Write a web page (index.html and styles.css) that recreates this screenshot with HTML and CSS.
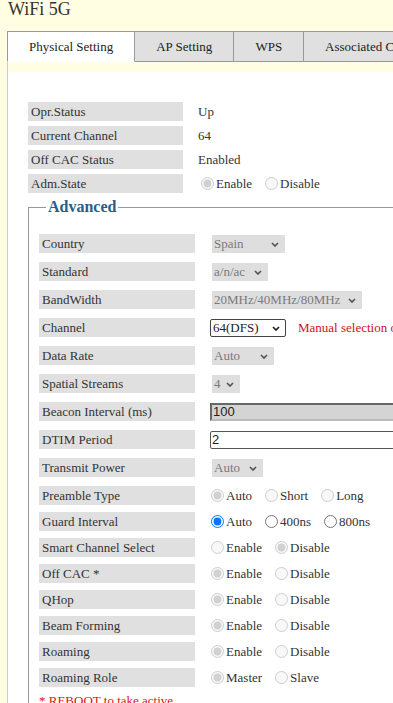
FILE: index.html
```html
<!DOCTYPE html>
<html lang="en">

<head>
  <meta charset="UTF-8">
  <meta name="viewport" content="width=device-width, initial-scale=1.0">
  <title>WiFi 5G</title>
  <link rel="stylesheet" href="styles.css">
</head>

<body>
  <div class="page">
    <h1 class="page-title">WiFi 5G</h1>

    <ul class="tabs">
      <li class="tab active">Physical Setting</li>
      <li class="tab">AP Setting</li>
      <li class="tab">WPS</li>
      <li class="tab">Associated Clients</li>
    </ul>

    <div class="tab-body">
      <div class="panel">
        <div class="status">
          <div class="field">
            <div class="label">Opr.Status</div>
            <div class="value">Up</div>
          </div>
          <div class="field">
            <div class="label">Current Channel</div>
            <div class="value">64</div>
          </div>
          <div class="field">
            <div class="label">Off CAC Status</div>
            <div class="value">Enabled</div>
          </div>
          <div class="field">
            <div class="label">Adm.State</div>
            <div class="value opts">
              <label class="opt"><input type="radio" name="adm" checked disabled>Enable</label>
              <label class="opt"><input type="radio" name="adm" disabled>Disable</label>
            </div>
          </div>
        </div>

        <fieldset class="advanced">
          <legend>Advanced</legend>
          <div class="field-list">
            <div class="field">
              <div class="label">Country</div>
              <div class="value">
                <span class="select-box sel-country is-disabled">
                  <select class="select" disabled>
                    <option>Spain</option>
                  </select>
                  <svg class="chev" viewBox="0 0 8 5"><path d="M1 1l3 3 3-3"/></svg>
                </span>
              </div>
            </div>
            <div class="field">
              <div class="label">Standard</div>
              <div class="value">
                <span class="select-box sel-std is-disabled">
                  <select class="select" disabled>
                    <option>a/n/ac</option>
                  </select>
                  <svg class="chev" viewBox="0 0 8 5"><path d="M1 1l3 3 3-3"/></svg>
                </span>
              </div>
            </div>
            <div class="field">
              <div class="label">BandWidth</div>
              <div class="value">
                <span class="select-box sel-bw is-disabled">
                  <select class="select" disabled>
                    <option>20MHz/40MHz/80MHz</option>
                  </select>
                  <svg class="chev" viewBox="0 0 8 5"><path d="M1 1l3 3 3-3"/></svg>
                </span>
              </div>
            </div>
            <div class="field">
              <div class="label">Channel</div>
              <div class="value">
                <span class="select-box sel-channel">
                  <select class="select">
                    <option>64(DFS)</option>
                  </select>
                  <svg class="chev" viewBox="0 0 8 5"><path d="M1 1l3 3 3-3"/></svg>
                </span>
                <span class="warn">Manual selection of DFS channel may cause service interruption</span>
              </div>
            </div>
            <div class="field">
              <div class="label">Data Rate</div>
              <div class="value">
                <span class="select-box sel-rate is-disabled">
                  <select class="select" disabled>
                    <option>Auto</option>
                  </select>
                  <svg class="chev" viewBox="0 0 8 5"><path d="M1 1l3 3 3-3"/></svg>
                </span>
              </div>
            </div>
            <div class="field">
              <div class="label">Spatial Streams</div>
              <div class="value">
                <span class="select-box sel-streams is-disabled">
                  <select class="select" disabled>
                    <option>4</option>
                  </select>
                  <svg class="chev" viewBox="0 0 8 5"><path d="M1 1l3 3 3-3"/></svg>
                </span>
              </div>
            </div>
            <div class="field">
              <div class="label">Beacon Interval (ms)</div>
              <div class="value">
                <input class="text readonly" type="text" value="100" readonly>
              </div>
            </div>
            <div class="field">
              <div class="label">DTIM Period</div>
              <div class="value">
                <input class="text" type="text" value="2">
              </div>
            </div>
            <div class="field">
              <div class="label">Transmit Power</div>
              <div class="value">
                <span class="select-box sel-power is-disabled">
                  <select class="select" disabled>
                    <option>Auto</option>
                  </select>
                  <svg class="chev" viewBox="0 0 8 5"><path d="M1 1l3 3 3-3"/></svg>
                </span>
              </div>
            </div>
            <div class="field radios">
              <div class="label">Preamble Type</div>
              <div class="value opts">
                <label class="opt"><input type="radio" name="preamble" checked disabled>Auto</label>
                <label class="opt"><input type="radio" name="preamble" disabled>Short</label>
                <label class="opt"><input type="radio" name="preamble" disabled>Long</label>
              </div>
            </div>
            <div class="field radios">
              <div class="label">Guard Interval</div>
              <div class="value opts">
                <label class="opt"><input type="radio" name="guard" checked>Auto</label>
                <label class="opt"><input type="radio" name="guard">400ns</label>
                <label class="opt"><input type="radio" name="guard">800ns</label>
              </div>
            </div>
            <div class="field radios">
              <div class="label">Smart Channel Select</div>
              <div class="value opts">
                <label class="opt"><input type="radio" name="smart" disabled>Enable</label>
                <label class="opt"><input type="radio" name="smart" checked disabled>Disable</label>
              </div>
            </div>
            <div class="field radios">
              <div class="label">Off CAC *</div>
              <div class="value opts">
                <label class="opt"><input type="radio" name="offcac" checked disabled>Enable</label>
                <label class="opt"><input type="radio" name="offcac" disabled>Disable</label>
              </div>
            </div>
            <div class="field radios">
              <div class="label">QHop</div>
              <div class="value opts">
                <label class="opt"><input type="radio" name="qhop" checked disabled>Enable</label>
                <label class="opt"><input type="radio" name="qhop" disabled>Disable</label>
              </div>
            </div>
            <div class="field radios">
              <div class="label">Beam Forming</div>
              <div class="value opts">
                <label class="opt"><input type="radio" name="beam" checked disabled>Enable</label>
                <label class="opt"><input type="radio" name="beam" disabled>Disable</label>
              </div>
            </div>
            <div class="field radios">
              <div class="label">Roaming</div>
              <div class="value opts">
                <label class="opt"><input type="radio" name="roaming" checked disabled>Enable</label>
                <label class="opt"><input type="radio" name="roaming" disabled>Disable</label>
              </div>
            </div>
            <div class="field radios">
              <div class="label">Roaming Role</div>
              <div class="value opts">
                <label class="opt"><input type="radio" name="role" checked disabled>Master</label>
                <label class="opt"><input type="radio" name="role" disabled>Slave</label>
              </div>
            </div>
          </div>
          <div class="note">* REBOOT to take active</div>
        </fieldset>
      </div>
    </div>
  </div>
</body>

</html>
```

FILE: styles.css
```css
* {
  box-sizing: border-box;
}

html,
body {
  margin: 0;
  padding: 0;
}

body {
  background: #fffde2;
  font-family: "Liberation Serif", "Times New Roman", serif;
  font-size: 13px;
  color: #333;
  overflow: hidden;
}

.page {
  width: 660px;
  padding-left: 7px;
}

.page-title {
  margin: 0;
  padding-left: 1px;
  font-size: 18px;
  line-height: 18px;
  font-weight: normal;
  color: #333;
}

/* tabs */

.tabs {
  display: flex;
  list-style: none;
  margin: 13px 0 0;
  padding: 0;
}

.tab {
  height: 31px;
  line-height: 29px;
  padding: 0 21px;
  border: 1px solid #999;
  border-left: none;
  background: #e0e0e0;
  color: #222;
  white-space: nowrap;
}

.tab:first-child {
  border-left: 1px solid #999;
}

.tab.active {
  background: #fff;
  border-bottom-color: transparent;
}

.tab-body {
  border-left: 1px solid #ccc;
  padding-top: 10px;
}

.panel {
  background: #fff;
  padding: 30px 0 20px 20px;
}

/* label / value rows */

.field {
  display: flex;
  align-items: center;
  height: 19px;
  margin-bottom: 5px;
}

.label {
  flex: none;
  width: 155px;
  height: 19px;
  line-height: 19px;
  padding-left: 3px;
  background: #e0e0e0;
  white-space: nowrap;
}

.value {
  display: flex;
  align-items: center;
  margin-left: 15px;
  white-space: nowrap;
}

.opts {
  gap: 10px;
}

.opt {
  display: inline-flex;
  align-items: center;
}

.opt input {
  width: 13px;
  height: 13px;
  margin: 0 2px 0 3px;
}

/* advanced block */

.advanced {
  margin: 1px 0 0;
  padding: 0 10px;
  border: 1px solid #999;
  min-width: 0;
}

.advanced legend {
  margin-left: 7px;
  padding: 0 2px;
  font-size: 16px;
  line-height: 18px;
  font-weight: bold;
  color: #2a5d8a;
}

.field-list {
  padding-top: 18px;
}

.advanced .field {
  margin-bottom: 9px;
}

.advanced .field.radios {
  margin-bottom: 7px;
}

.advanced .label {
  width: 156px;
}

.advanced .value {
  margin-left: 13px;
}

/* selects with drawn chevron */

.select-box {
  position: relative;
  display: inline-flex;
  height: 18px;
  margin-left: 2px;
}

.select-box.is-disabled {
  margin-left: 4px;
}

.select {
  appearance: none;
  -webkit-appearance: none;
  width: 100%;
  height: 18px;
  margin: 0;
  padding: 0 0 0 2px;
  font-family: inherit;
  font-size: 13px;
  color: #7a7a7a;
  background: #dedede;
  border: none;
  border-radius: 0;
  opacity: 1;
}

.chev {
  position: absolute;
  right: 6px;
  top: 7px;
  width: 8px;
  height: 5px;
  fill: none;
  stroke: #555;
  stroke-width: 1.7;
  pointer-events: none;
}

.sel-channel .select {
  color: #222;
  background: #fff;
  border: 1px solid #444;
  border-radius: 2px;
}

.sel-channel .chev {
  stroke: #222;
}

.sel-country { width: 73px; }
.sel-std { width: 56px; }
.sel-bw { width: 150px; }
.sel-channel { width: 76px; }
.sel-rate { width: 62px; }
.sel-streams { width: 28px; }
.sel-power { width: 51px; }

.warn {
  margin-left: 12px;
  color: #cc1122;
}

.text {
  width: 260px;
  height: 18px;
  margin-left: 2px;
  padding: 0 1px;
  font-family: "Liberation Sans", Arial, sans-serif;
  font-size: 13px;
  color: #222;
  background: #fff;
  border: 1px solid #555;
  border-radius: 2px;
}

.text.readonly {
  background: #d4d4d4;
  border: 2px inset #bbb;
  border-radius: 0;
}

.note {
  line-height: 14px;
  color: #dd1111;
}
```
